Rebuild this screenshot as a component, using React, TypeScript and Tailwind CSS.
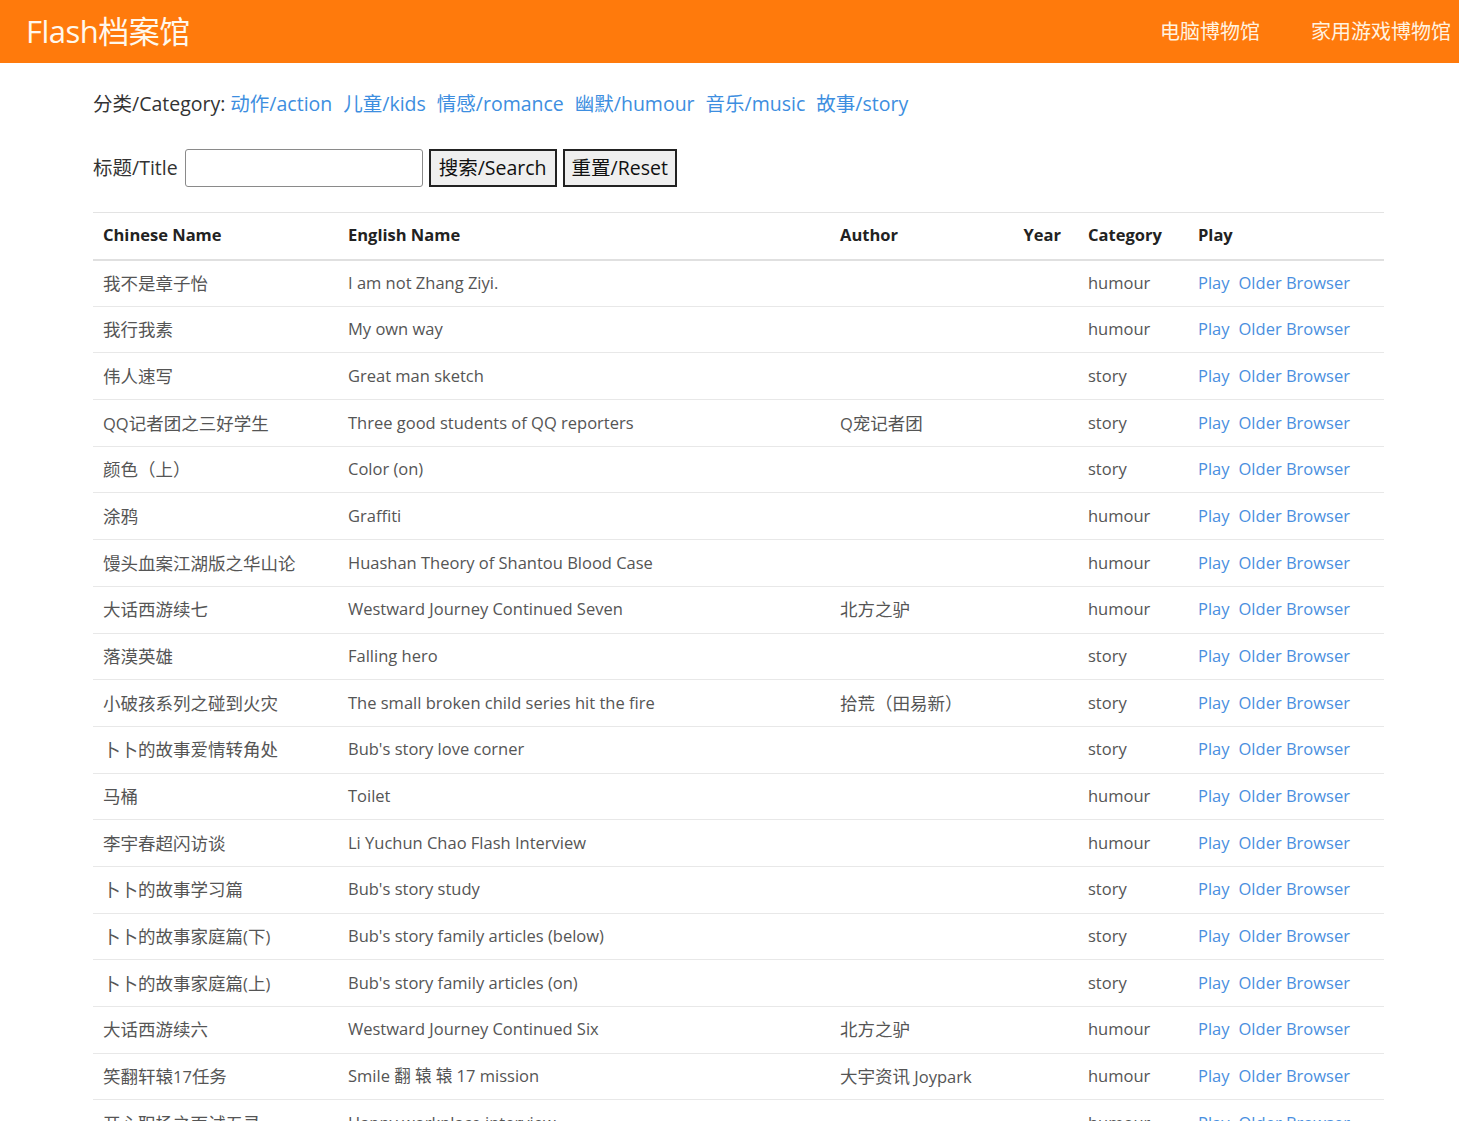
const ROWS: [string, string, string, string][] = [
  ["我不是章子怡", "I am not Zhang Ziyi.", "", "humour"],
  ["我行我素", "My own way", "", "humour"],
  ["伟人速写", "Great man sketch", "", "story"],
  ["QQ记者团之三好学生", "Three good students of QQ reporters", "Q宠记者团", "story"],
  ["颜色（上）", "Color (on)", "", "story"],
  ["涂鸦", "Graffiti", "", "humour"],
  ["馒头血案江湖版之华山论", "Huashan Theory of Shantou Blood Case", "", "humour"],
  ["大话西游续七", "Westward Journey Continued Seven", "北方之驴", "humour"],
  ["落漠英雄", "Falling hero", "", "story"],
  ["小破孩系列之碰到火灾", "The small broken child series hit the fire", "拾荒（田易新）", "story"],
  ["卜卜的故事爱情转角处", "Bub's story love corner", "", "story"],
  ["马桶", "Toilet", "", "humour"],
  ["李宇春超闪访谈", "Li Yuchun Chao Flash Interview", "", "humour"],
  ["卜卜的故事学习篇", "Bub's story study", "", "story"],
  ["卜卜的故事家庭篇(下)", "Bub's story family articles (below)", "", "story"],
  ["卜卜的故事家庭篇(上)", "Bub's story family articles (on)", "", "story"],
  ["大话西游续六", "Westward Journey Continued Six", "北方之驴", "humour"],
  ["笑翻轩辕17任务", "Smile 翻 辕 辕 17 mission", "大宇资讯 Joypark", "humour"],
  ["开心职场之面试五录", "Happy workplace interview", "", "humour"],
];

const CATS = ["动作/action", "儿童/kids", "情感/romance", "幽默/humour", "音乐/music", "故事/story"];

// chinese glyphs in the original font run a little wider than latin ones
function Mixed({ text }: { text: string }) {
  const parts = text.split(/([\u3000-\u9fff\uff00-\uffef]+)/).filter(Boolean);
  return (
    <>
      {parts.map((p, i) =>
        /[\u3000-\u9fff\uff00-\uffef]/.test(p) ? (
          <span key={i} className="text-[17.5px]">{p}</span>
        ) : (
          <span key={i}>{p}</span>
        )
      )}
    </>
  );
}

export default function App() {
  return (
    <div className="h-[1121px] overflow-hidden bg-white font-['Open_Sans','Noto_Sans_CJK_SC',sans-serif]">
      <header className="h-[63px] bg-[#ff7a0c] flex items-center justify-between pl-[26px] pr-[8px]">
        <div className="text-[31px] text-[#fff8ec] tracking-[-0.5px]">Flash档案馆</div>
        <nav className="flex gap-[51px] text-[20px] text-[#fff3e0]">
          <a>电脑博物馆</a>
          <a>家用游戏博物馆</a>
        </nav>
      </header>

      <main className="px-[93px]">
        <div className="mt-[26px] h-[29px] text-[19.5px] text-[#333] flex items-center gap-[11px]">
          <span className="-mr-[6px]">分类/Category:</span>
          {CATS.map((c) => (
            <a key={c} className="text-[#3d8ee0] cursor-pointer">{c}</a>
          ))}
        </div>

        <div className="mt-[31px] flex items-center text-[19.5px] text-[#333]">
          <span>标题/Title</span>
          <input className="ml-[7px] w-[238px] h-[38px] border border-[#8a8a8a] rounded-[3px] bg-white" />
          <button className="ml-[6px] h-[38px] px-[8px] border-2 border-[#222] bg-[#efefef] text-[#111] text-[19.5px]">搜索/Search</button>
          <button className="ml-[6px] h-[38px] px-[7px] border-2 border-[#222] bg-[#efefef] text-[#111] text-[19.5px]">重置/Reset</button>
        </div>

        <table className="mt-[25px] w-[1291px] border-collapse table-fixed text-[16.5px]">
          <colgroup>
            <col className="w-[245px]" />
            <col className="w-[492px]" />
            <col className="w-[185px]" />
            <col className="w-[63px]" />
            <col className="w-[110px]" />
            <col className="w-[196px]" />
          </colgroup>
          <thead>
            <tr className="h-[47px] border-t border-[#e3e3e3] border-b-2 border-b-[#e0e0e0] text-[#222] font-bold">
              <th className="text-left px-[10px]">Chinese Name</th>
              <th className="text-left px-[10px]">English Name</th>
              <th className="text-left px-[10px]">Author</th>
              <th className="text-right pl-[4px] pr-[17px]">Year</th>
              <th className="text-left px-[10px]">Category</th>
              <th className="text-left px-[10px]">Play</th>
            </tr>
          </thead>
          <tbody>
            {ROWS.map((r, i) => (
              <tr key={i} className="h-[46.7px] border-b border-[#e8e8e8] text-[#555]">
                <td className="px-[10px] whitespace-nowrap"><Mixed text={r[0]} /></td>
                <td className="px-[10px] whitespace-nowrap">{r[1]}</td>
                <td className="px-[10px] whitespace-nowrap"><Mixed text={r[2]} /></td>
                <td className="px-[10px]"></td>
                <td className="px-[10px]">{r[3]}</td>
                <td className="px-[10px] whitespace-nowrap text-[#4a8fe0]">
                  <a className="cursor-pointer">Play</a>
                  <a className="ml-[9px] cursor-pointer">Older Browser</a>
                </td>
              </tr>
            ))}
          </tbody>
        </table>
      </main>
    </div>
  );
}
